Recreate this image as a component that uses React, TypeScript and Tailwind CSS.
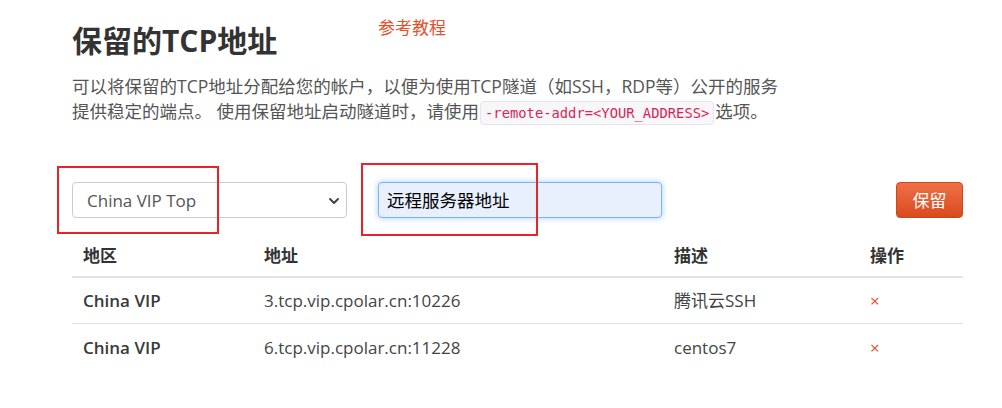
import React from "react";

const font = { fontFamily: '"Open Sans", "Noto Sans CJK SC", sans-serif' };

export default function App() {
  return (
    <div className="w-[1002px] h-[408px] bg-white overflow-hidden text-[#333] relative" style={font}>
      <div className="pl-[72px] pr-[39px]">
        <div className="flex items-start h-[74px]">
          <h1 className="mt-[21px] text-[30px] leading-[40px] font-bold text-[#333] w-[306px]">保留的TCP地址</h1>
          <a className="mt-[16px] text-[17px] leading-[24px] text-[#e4502a]">参考教程</a>
        </div>
        <p className="text-[17.5px] leading-[25px] text-[#555] w-[760px] whitespace-nowrap">
          可以将保留的TCP地址分配给您的帐户，以便为使用TCP隧道（如SSH，RDP等）公开的服务
          <br />
          提供稳定的端点。 使用保留地址启动隧道时，请使用
          <code
            className="mx-[1px] inline-block h-[24px] px-[4px] leading-[22px] text-[13.8px] text-[#dd1f55] bg-[#f7f7f9] border border-[#e4e4ea] rounded-[4px] align-middle"
            style={{ fontFamily: '"DejaVu Sans Mono", monospace' }}
          >
            -remote-addr=&lt;YOUR_ADDRESS&gt;
          </code>
          选项。
        </p>
        <div className="mt-[57px] flex items-center h-[36px]">
          <div className="relative w-[275px] h-[36px] border border-[#cccccc] rounded-[4px] flex items-center pl-[14px] text-[17px] text-[#555]">
            China VIP Top
            <svg className="absolute right-[6px] top-[12px]" width="12" height="12" viewBox="0 0 12 12">
              <path d="M2 4l4 4 4-4" fill="none" stroke="#444" strokeWidth="2" strokeLinecap="round" strokeLinejoin="round" />
            </svg>
          </div>
          <div className="ml-[31px] w-[284px] h-[36px] rounded-[4px] border border-[#7ab6ee] bg-[#e8f0fe] shadow-[0_0_6px_rgba(102,175,233,0.6)] flex items-center pl-[8px] text-[17.5px] text-black">
            远程服务器地址
          </div>
          <div className="flex-1" />
          <button className="w-[67px] h-[36px] rounded-[4px] bg-gradient-to-b from-[#ef7046] to-[#d94a1a] border border-[#d0461b] text-white text-[17px]">
            保留
          </button>
        </div>
        <div className="mt-[17px] w-[891px] text-[17px]">
          <div className="grid grid-cols-[181px_410px_196px_104px] h-[43px] items-center border-b-2 border-[#e3e3e3] font-bold">
            <div className="pl-[11px]">地区</div>
            <div className="pl-[11px]">地址</div>
            <div className="pl-[11px]">描述</div>
            <div className="pl-[11px]">操作</div>
          </div>
          {[
            ["3.tcp.vip.cpolar.cn:10226", "腾讯云SSH"],
            ["6.tcp.vip.cpolar.cn:11228", "centos7"],
          ].map(([addr, desc], i) => (
            <div
              key={addr}
              className={`grid grid-cols-[181px_410px_196px_104px] h-[46px] items-center ${i === 0 ? "border-b border-[#e3e3e3]" : ""}`}
            >
              <div className="pl-[11px] font-semibold text-[#3a3a3a]">China VIP</div>
              <div className="pl-[11px] text-[#444]">{addr}</div>
              <div className="pl-[11px] text-[#444]">{desc}</div>
              <div className="pl-[11px] text-[#e4502a] text-[17px]">×</div>
            </div>
          ))}
        </div>
      </div>
      <div className="absolute left-[57px] top-[166px] w-[162px] h-[68px] border-2 border-[#e8232a]" />
      <div className="absolute left-[361px] top-[163px] w-[177px] h-[73px] border-2 border-[#e8232a]" />
    </div>
  );
}
